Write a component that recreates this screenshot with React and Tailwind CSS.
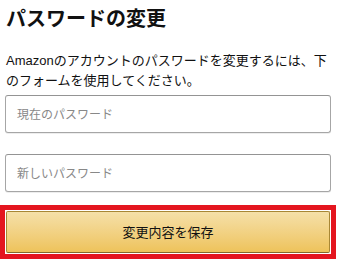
export default function App() {
  const font = { fontFamily: '"Noto Sans CJK JP", "Noto Sans", Arial, sans-serif' };
  return (
    <div className="w-[340px] h-[269px] bg-white overflow-hidden text-[#111]" style={font}>
      <div className="pl-[6px] pt-[4px]">
        <h1 className="text-[20px] leading-[28px] font-bold m-0">パスワードの変更</h1>
        <p className="mt-[18px] text-[13px] leading-[19px] pr-[12px]">
          <span style={{ fontFamily: 'Arial, "Liberation Sans", sans-serif' }}>Amazon</span>のアカウントのパスワードを変更するには、下のフォームを使用してください。
        </p>
      </div>
      <div className="pl-[5px] mt-[6px] flex flex-col">
        <div className="w-[326px] h-[38px] border border-[#a6a6a6] border-t-[#949494] rounded-[3px] shadow-[0_1px_0_rgba(0,0,0,0.07)] flex items-center pl-[11px] text-[12px] text-[#888]">
          現在のパスワード
        </div>
        <div className="mt-[21px] w-[326px] h-[38px] border border-[#a6a6a6] border-t-[#949494] rounded-[3px] shadow-[0_1px_0_rgba(0,0,0,0.07)] flex items-center pl-[11px] text-[12px] text-[#888]">
          新しいパスワード
        </div>
      </div>
      <div className="mt-[13px] w-[336px] border-[5px] border-[#e4151f] p-[1px] bg-white">
        <div className="h-[42px] w-full rounded-[2px] border border-[#a88734] border-b-[#846a29] bg-gradient-to-b from-[#f5e0a8] to-[#eec35a] flex items-center justify-center text-[13px] text-[#111]">
          変更内容を保存
        </div>
      </div>
    </div>
  );
}
